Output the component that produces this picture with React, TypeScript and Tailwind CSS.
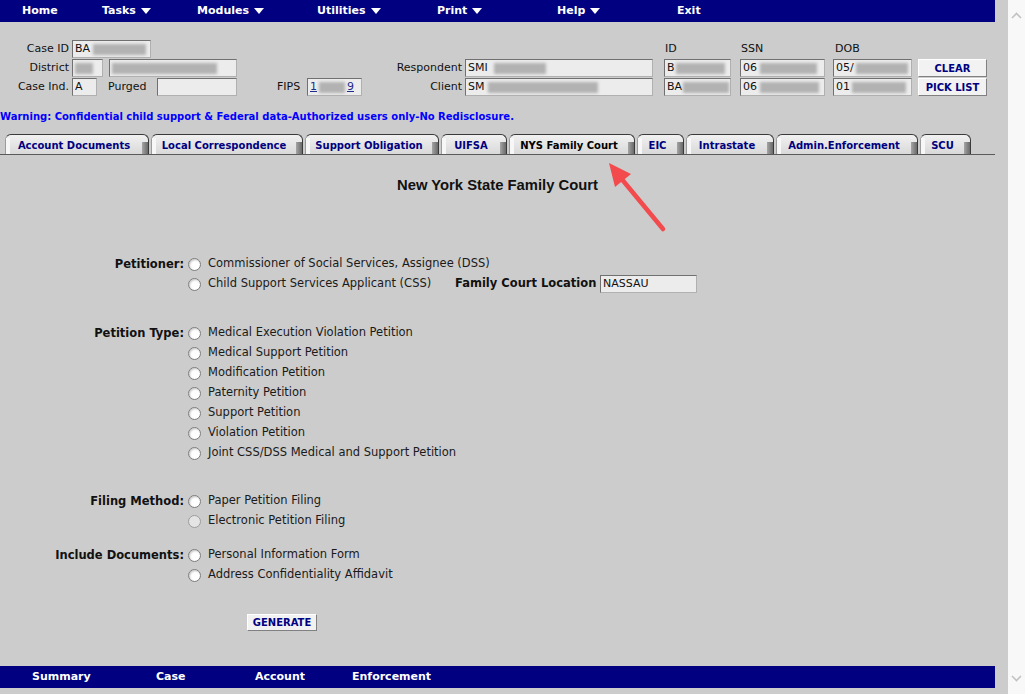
import React from "react";

// small grey smear standing in for masked case data
function Blur({ cls }: { cls: string }) {
  return <span className={`inline-block h-[11px] bg-[#b2b2b2] blur-[1.5px] ${cls}`} />;
}

function Field({ cls, children }: { cls: string; children?: React.ReactNode }) {
  return (
    <div
      className={`flex items-center h-[18px] bg-[#ececec] border border-[#b0b0b0] border-t-[#707070] border-l-[#707070] pl-[2px] text-[11px] text-[#111] overflow-hidden whitespace-nowrap ${cls}`}
    >
      {children}
    </div>
  );
}

function Label({ cls, children }: { cls: string; children: React.ReactNode }) {
  return <div className={`text-right text-[11px] text-[#111] whitespace-nowrap ${cls}`}>{children}</div>;
}

function Btn({ cls, children }: { cls: string; children: React.ReactNode }) {
  return (
    <div
      className={`flex items-center justify-center bg-[#f2f2f2] border border-white border-r-[#808080] border-b-[#808080] text-[10px] font-bold text-[#000080] ${cls}`}
    >
      {children}
    </div>
  );
}

function Caret() {
  return (
    <svg width="10" height="6" viewBox="0 0 10 6" className="ml-[5px]">
      <path d="M0 0h10L5 6z" fill="white" />
    </svg>
  );
}

function Radio({ children, off }: { children: React.ReactNode; off?: boolean }) {
  return (
    <div className="flex items-center h-[20px]">
      <span
        className={
          off
            ? "w-[13px] h-[13px] rounded-full border border-[#9c9c9c] bg-[#e4e4e4]"
            : "w-[13px] h-[13px] rounded-full border border-[#7c7c7c] bg-white shadow-[inset_1px_1px_2px_#c4c4c4]"
        }
      />
      <span className="ml-[7px] text-[11.5px] text-[#1a1a1a] whitespace-nowrap">{children}</span>
    </div>
  );
}

function Group({ label, cls, children }: { label: string; cls: string; children: React.ReactNode }) {
  return (
    <div className={`flex ${cls}`}>
      <div className="w-[184px] h-[20px] leading-[20px] text-right text-[11.5px] font-bold text-[#111] whitespace-nowrap">{label}</div>
      <div className="ml-[4px] flex flex-col">{children}</div>
    </div>
  );
}

const tabs: [string, string][] = [
  ["Account Documents", "w-[144px]"],
  ["Local Correspondence", "w-[152px]"],
  ["Support Obligation", "w-[134px]"],
  ["UIFSA", "w-[66px]"],
  ["NYS Family Court", "w-[126px]"],
  ["EIC", "w-[47px]"],
  ["Intrastate", "w-[88px]"],
  ["Admin.Enforcement", "w-[142px]"],
  ["SCU", "w-[51px]"],
];

export default function App() {
  return (
    <div className="flex w-[1025px] h-[694px] overflow-hidden bg-[#cccccc] font-['DejaVu_Sans',sans-serif]">
      <div className="relative flex flex-col w-[1008px] h-[694px]">
        {/* top menu */}
        <div className="flex items-center w-[995px] h-[22px] bg-[#000080] text-white text-[11px] font-bold pl-[22px]">
          <span className="w-[80px]">Home</span>
          <span className="w-[95px] flex items-center">Tasks<Caret /></span>
          <span className="w-[120px] flex items-center">Modules<Caret /></span>
          <span className="w-[120px] flex items-center">Utilities<Caret /></span>
          <span className="w-[120px] flex items-center">Print<Caret /></span>
          <span className="w-[120px] flex items-center">Help<Caret /></span>
          <span>Exit</span>
        </div>

        {/* case header */}
        <div className="flex flex-col gap-[1px] mt-[18px]">
          <div className="flex items-center h-[18px]">
            <Label cls="w-[69px]">Case ID</Label>
            <Field cls="ml-[3px] w-[79px]">
              BA<Blur cls="ml-[3px] w-[53px]" />
            </Field>
            <span className="ml-[514px] w-[76px] text-[11px] text-[#111]">ID</span>
            <span className="w-[94px] text-[11px] text-[#111]">SSN</span>
            <span className="text-[11px] text-[#111]">DOB</span>
          </div>
          <div className="flex items-center h-[18px]">
            <Label cls="w-[69px]">District</Label>
            <Field cls="ml-[3px] w-[31px]">
              <Blur cls="w-[18px]" />
            </Field>
            <Field cls="ml-[6px] w-[128px]">
              <Blur cls="w-[105px]" />
            </Field>
            <Label cls="w-[225px]">Respondent</Label>
            <Field cls="ml-[3px] w-[188px]">
              SMI<Blur cls="ml-[6px] w-[52px]" />
            </Field>
            <Field cls="ml-[11px] w-[67px]">
              B<Blur cls="ml-[1px] w-[49px]" />
            </Field>
            <Field cls="ml-[9px] w-[85px]">
              06<Blur cls="ml-[3px] w-[57px]" />
            </Field>
            <Field cls="ml-[8px] w-[79px]">
              05/<Blur cls="ml-[2px] w-[52px]" />
            </Field>
            <Btn cls="ml-[6px] w-[69px] h-[18px]">CLEAR</Btn>
          </div>
          <div className="flex items-center h-[18px]">
            <Label cls="w-[69px]">Case Ind.</Label>
            <Field cls="ml-[3px] w-[25px]">A</Field>
            <span className="ml-[11px] w-[49px] text-[11px] text-[#111]">Purged</span>
            <Field cls="w-[80px]" />
            <span className="ml-[40px] w-[30px] text-[11px] text-[#111]">FIPS</span>
            <Field cls="w-[55px]">
              <span className="flex items-center underline text-[#1c2b8c]">
                1<Blur cls="mx-[2px] w-[26px]" />9
              </span>
            </Field>
            <Label cls="w-[100px]">Client</Label>
            <Field cls="ml-[3px] w-[188px]">
              SM<Blur cls="ml-[4px] w-[110px]" />
            </Field>
            <Field cls="ml-[11px] w-[67px]">
              BA<Blur cls="ml-[1px] w-[46px]" />
            </Field>
            <Field cls="ml-[9px] w-[85px]">
              06<Blur cls="ml-[3px] w-[59px]" />
            </Field>
            <Field cls="ml-[8px] w-[79px]">
              01<Blur cls="ml-[2px] w-[54px]" />
            </Field>
            <Btn cls="ml-[6px] w-[69px] h-[18px]">PICK LIST</Btn>
          </div>
        </div>

        <div className="mt-[14px] h-[14px] leading-[14px] text-[10px] font-bold text-[#0000ff] whitespace-nowrap">
          Warning: Confidential child support &amp; Federal data-Authorized users only-No Redisclosure.
        </div>

        {/* tabs */}
        <div className="mt-[10px] flex items-end gap-[2px] w-[995px] pl-[5px] border-b border-[#5a5a5a]">
          {tabs.map(([t, w]) => (
            <div
              key={t}
              className={`relative flex items-center justify-center h-[20px] ${w} pr-[6px] pt-[1px] rounded-t-[6px] border border-b-0 border-[#3a3a3a] border-l-[#9c9c9c] bg-gradient-to-b from-[#f1f1f1] to-[#d9d9d9] text-[10px] font-bold whitespace-nowrap ${
                t === "NYS Family Court" ? "text-black" : "text-[#000080]"
              }`}
            >
              <span className="absolute left-0 top-[3px] bottom-0 w-[4px] bg-[#f7f7f7]" />
              <span className="absolute right-0 top-[7px] bottom-0 w-[6px] bg-gradient-to-r from-[#a5a5a5] to-[#6a6a6a]" />
              {t}
            </div>
          ))}
        </div>

        <div className="w-[995px] mt-[21px] h-[18px] leading-[18px] text-center text-[14.8px] font-bold text-[#111] font-['Liberation_Sans',Arial,sans-serif]">
          New York State Family Court
        </div>

        {/* petition form */}
        <Group label="Petitioner:" cls="mt-[60px]">
          <Radio>Commissioner of Social Services, Assignee (DSS)</Radio>
          <div className="flex items-center h-[20px]">
            <div className="w-[267px]">
              <Radio>Child Support Services Applicant (CSS)</Radio>
            </div>
            <span className="w-[145px] text-[11.5px] font-bold text-[#111] whitespace-nowrap">Family Court Location</span>
            <Field cls="w-[97px] h-[17px]">NASSAU</Field>
          </div>
        </Group>

        <Group label="Petition Type:" cls="mt-[29px]">
          <Radio>Medical Execution Violation Petition</Radio>
          <Radio>Medical Support Petition</Radio>
          <Radio>Modification Petition</Radio>
          <Radio>Paternity Petition</Radio>
          <Radio>Support Petition</Radio>
          <Radio>Violation Petition</Radio>
          <Radio>Joint CSS/DSS Medical and Support Petition</Radio>
        </Group>

        <Group label="Filing Method:" cls="mt-[28px]">
          <Radio>Paper Petition Filing</Radio>
          <Radio off>Electronic Petition Filing</Radio>
        </Group>

        <Group label="Include Documents: " cls="mt-[14px]">
          <Radio>Personal Information Form</Radio>
          <Radio>Address Confidentiality Affidavit</Radio>
        </Group>

        <div className="mt-[29px] pl-[247px]">
          <Btn cls="w-[70px] h-[17px]">GENERATE</Btn>
        </div>

        {/* bottom menu */}
        <div className="mt-auto mb-[6px] flex items-center w-[995px] h-[22px] bg-[#000080] text-white text-[11px] font-bold pl-[32px]">
          <span className="w-[124px]">Summary</span>
          <span className="w-[99px]">Case</span>
          <span className="w-[97px]">Account</span>
          <span>Enforcement</span>
        </div>

        {/* red callout arrow */}
        <svg className="absolute left-0 top-0 pointer-events-none" width="1008" height="694">
          <line x1="663" y1="229" x2="620" y2="177" stroke="#f24a4d" strokeWidth="4.5" strokeLinecap="round" />
          <polygon points="609,163 631,174 615,187" fill="#f24a4d" />
        </svg>
      </div>

      {/* scrollbar */}
      <div className="flex flex-col justify-between items-center w-[17px] h-[694px] bg-[#f8f8f8] py-[12px]">
        <svg width="11" height="7" viewBox="0 0 11 7">
          <path d="M1 6l4.5-4.5L10 6" stroke="#c2c2c2" strokeWidth="1.6" fill="none" />
        </svg>
        <svg width="11" height="7" viewBox="0 0 11 7">
          <path d="M1 1l4.5 4.5L10 1" stroke="#c2c2c2" strokeWidth="1.6" fill="none" />
        </svg>
      </div>
    </div>
  );
}
